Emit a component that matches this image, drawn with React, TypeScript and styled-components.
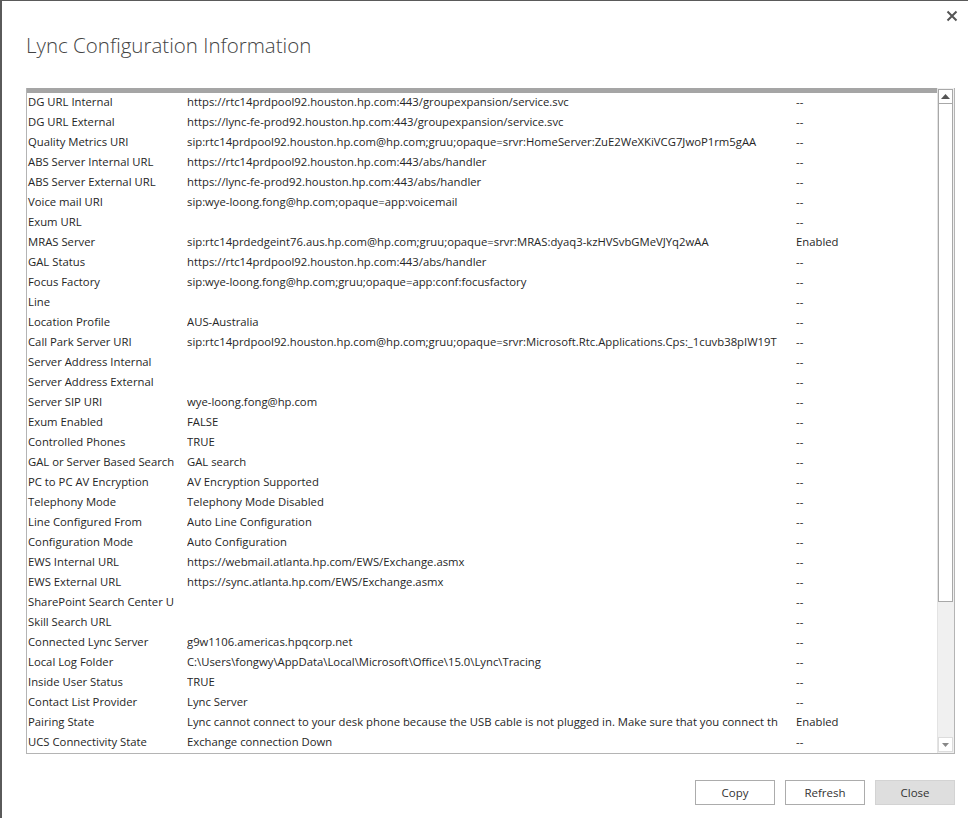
import React from "react";
import styled, { createGlobalStyle } from "styled-components";

const Global = createGlobalStyle`
  html, body { margin: 0; padding: 0; background: #ffffff; }
  body { font-family: "Open Sans", "Noto Sans", sans-serif; color: #333; }
  * { box-sizing: border-box; }
`;

const Window = styled.div`
  width: 968px;
  height: 818px;
  border-top: 1px solid #5a5a5a;
  border-left: 2px solid #5a5a5a;
  background: #fff;
  display: flex;
  flex-direction: column;
  position: relative;
  overflow: hidden;
`;

const CloseX = styled.button`
  position: absolute;
  top: 7px;
  right: 8px;
  width: 16px;
  height: 16px;
  padding: 0;
  border: none;
  background: transparent;
  display: flex;
  align-items: center;
  justify-content: center;
`;

const Title = styled.h1`
  margin: 0;
  padding: 30px 0 0 24px;
  height: 87px;
  font-family: "Open Sans", "Noto Sans", sans-serif;
  font-weight: 300;
  font-size: 20.5px;
  color: #444;
  letter-spacing: 0;
`;

const Frame = styled.div`
  margin-left: 24px;
  width: 929px;
  height: 666px;
  border: 1px solid #b4b4b4;
  border-top: none;
  display: flex;
`;

const ListArea = styled.div`
  flex: 1;
  display: flex;
  flex-direction: column;
  overflow: hidden;
`;

const HeaderBar = styled.div`
  height: 5px;
  background: #a5a5a5;
  flex-shrink: 0;
  margin-bottom: -2px;
`;

const Row = styled.div`
  display: grid;
  grid-template-columns: 160px 609px 1fr;
  height: 20px;
  align-items: center;
  font-size: 11.3px;
  color: #262626;
  white-space: nowrap;
`;

const Cell = styled.div<{ $pad?: number; $gap?: number }>`
  overflow: hidden;
  padding-left: ${(p) => p.$pad ?? 0}px;
  margin-right: ${(p) => p.$gap ?? 0}px;
`;

const Scrollbar = styled.div`
  width: 17px;
  border-left: 1px solid #e3e3e3;
  padding: 1px 1px 1px 0;
  display: flex;
  flex-direction: column;
  background: #f0f0f0;
`;

const ArrowBtn = styled.div`
  height: 15px;
  background: #fff;
  border: 1px solid #a8a8a8;
  display: flex;
  align-items: center;
  justify-content: center;
  flex-shrink: 0;
`;

const Thumb = styled.div`
  height: 498px;
  background: #fff;
  border: 1px solid #a8a8a8;
  border-top: none;
  flex-shrink: 0;
`;

const Track = styled.div`
  flex: 1;
  background: #f0f0f0;
`;

const DownBtn = styled(ArrowBtn)`
  border-color: #dcdcdc;
`;

const Footer = styled.div`
  display: flex;
  justify-content: flex-end;
  gap: 10px;
  padding: 26px 13px 0 0;
`;

const Button = styled.button<{ $active?: boolean }>`
  width: 80px;
  height: 25px;
  font-family: "Open Sans", "Noto Sans", sans-serif;
  font-size: 11.5px;
  color: #333;
  background: ${(p) => (p.$active ? "#dedede" : "#ffffff")};
  border: 1px solid ${(p) => (p.$active ? "#d3d3d3" : "#acacac")};
  padding: 0;
`;

type Item = [string, string, string];

const rows: Item[] = [
  ["DG URL Internal", "https://rtc14prdpool92.houston.hp.com:443/groupexpansion/service.svc", "--"],
  ["DG URL External", "https://lync-fe-prod92.houston.hp.com:443/groupexpansion/service.svc", "--"],
  ["Quality Metrics URI", "sip:rtc14prdpool92.houston.hp.com@hp.com;gruu;opaque=srvr:HomeServer:ZuE2WeXKiVCG7JwoP1rm5gAA", "--"],
  ["ABS Server Internal URL", "https://rtc14prdpool92.houston.hp.com:443/abs/handler", "--"],
  ["ABS Server External URL", "https://lync-fe-prod92.houston.hp.com:443/abs/handler", "--"],
  ["Voice mail URI", "sip:wye-loong.fong@hp.com;opaque=app:voicemail", "--"],
  ["Exum URL", "", "--"],
  ["MRAS Server", "sip:rtc14prdedgeint76.aus.hp.com@hp.com;gruu;opaque=srvr:MRAS:dyaq3-kzHVSvbGMeVJYq2wAA", "Enabled"],
  ["GAL Status", "https://rtc14prdpool92.houston.hp.com:443/abs/handler", "--"],
  ["Focus Factory", "sip:wye-loong.fong@hp.com;gruu;opaque=app:conf:focusfactory", "--"],
  ["Line", "", "--"],
  ["Location Profile", "AUS-Australia", "--"],
  ["Call Park Server URI", "sip:rtc14prdpool92.houston.hp.com@hp.com;gruu;opaque=srvr:Microsoft.Rtc.Applications.Cps:_1cuvb38pIW19T", "--"],
  ["Server Address Internal", "", "--"],
  ["Server Address External", "", "--"],
  ["Server SIP URI", "wye-loong.fong@hp.com", "--"],
  ["Exum Enabled", "FALSE", "--"],
  ["Controlled Phones", "TRUE", "--"],
  ["GAL or Server Based Search", "GAL search", "--"],
  ["PC to PC AV Encryption", "AV Encryption Supported", "--"],
  ["Telephony Mode", "Telephony Mode Disabled", "--"],
  ["Line Configured From", "Auto Line Configuration", "--"],
  ["Configuration Mode", "Auto Configuration", "--"],
  ["EWS Internal URL", "https://webmail.atlanta.hp.com/EWS/Exchange.asmx", "--"],
  ["EWS External URL", "https://sync.atlanta.hp.com/EWS/Exchange.asmx", "--"],
  ["SharePoint Search Center U", "", "--"],
  ["Skill Search URL", "", "--"],
  ["Connected Lync Server", "g9w1106.americas.hpqcorp.net", "--"],
  ["Local Log Folder", "C:\\Users\\fongwy\\AppData\\Local\\Microsoft\\Office\\15.0\\Lync\\Tracing", "--"],
  ["Inside User Status", "TRUE", "--"],
  ["Contact List Provider", "Lync Server", "--"],
  ["Pairing State", "Lync cannot connect to your desk phone because the USB cable is not plugged in. Make sure that you connect th", "Enabled"],
  ["UCS Connectivity State", "Exchange connection Down", "--"],
];

export default function App() {
  return (
    <>
      <Global />
      <Window>
        <CloseX aria-label="Close">
          <svg width="12" height="12" viewBox="0 0 12 12">
            <path d="M1.5 1.5 L10.5 10.5 M10.5 1.5 L1.5 10.5" stroke="#555" strokeWidth="2" />
          </svg>
        </CloseX>
        <Title>Lync Configuration Information</Title>
        <Frame>
          <ListArea>
            <HeaderBar />
            {rows.map(([label, value, status]) => (
              <Row key={label}>
                <Cell $pad={1} $gap={13}>{label}</Cell>
                <Cell $gap={10}>{value}</Cell>
                <Cell>{status}</Cell>
              </Row>
            ))}
          </ListArea>
          <Scrollbar>
            <ArrowBtn>
              <svg width="9" height="5" viewBox="0 0 9 5">
                <path d="M0 5 L4.5 0 L9 5 Z" fill="#555" />
              </svg>
            </ArrowBtn>
            <Thumb />
            <Track />
            <DownBtn>
              <svg width="7" height="4" viewBox="0 0 7 4">
                <path d="M0 0 L7 0 L3.5 4 Z" fill="#888" />
              </svg>
            </DownBtn>
          </Scrollbar>
        </Frame>
        <Footer>
          <Button>Copy</Button>
          <Button>Refresh</Button>
          <Button $active>Close</Button>
        </Footer>
      </Window>
    </>
  );
}
